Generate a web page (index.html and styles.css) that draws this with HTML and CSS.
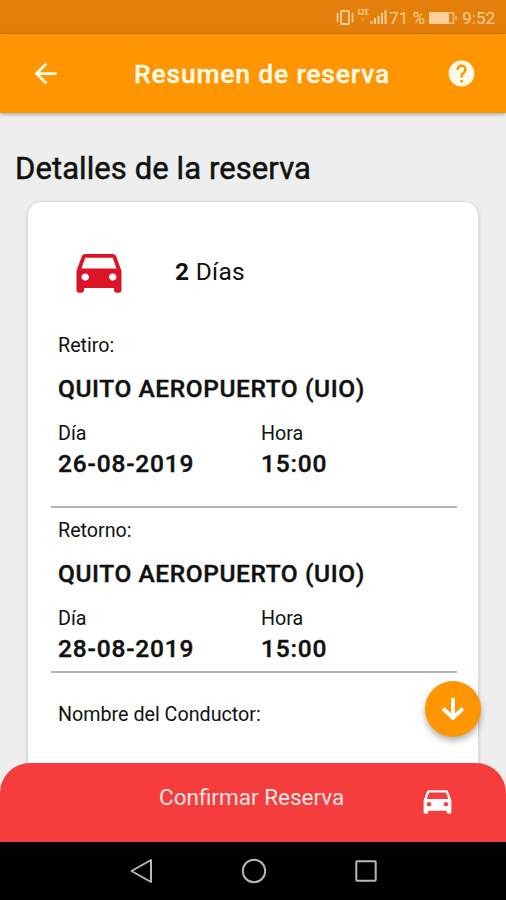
FILE: index.html
```html
<!DOCTYPE html>
<html lang="es">
<head>
<meta charset="utf-8">
<title>Resumen de reserva</title>
<link rel="stylesheet" href="styles.css">
</head>
<body>
<div class="screen">
  <div class="status">
    <svg class="status-icons" width="52" height="20" viewBox="0 0 52 20">
      <rect x="5" y="3" width="8" height="13" rx="1" fill="none" stroke="currentColor" stroke-width="1.9"/>
      <path d="M1.500 5v9M16.500 5v9" stroke="currentColor" stroke-width="1.700"/>
      <path d="M23 1v5h3M25 1.500h4M27 1v6M32.500 1.500h-2.500v5h2.500M30 4h2" fill="none" stroke="currentColor" stroke-width="1.200"/>
      <path d="M25 10l2 3 2-3" fill="none" stroke="currentColor" opacity=".35"/>
      <path d="M35.500 16v-3M39 16v-6M42.500 16V8M46 16V5M49.500 16V2" stroke="currentColor" stroke-width="2"/>
    </svg>
    <span class="percent">71 %</span>
    <svg class="battery" width="28" height="14" viewBox="0 0 28 14">
      <rect x="0" y="1" width="20" height="12" rx="1" fill="currentColor"/>
      <path d="M20 1.800h4.500v10.400H20M27 5v4" fill="none" stroke="currentColor" stroke-width="1.300"/>
    </svg>
    <span class="clock">9:52</span>
  </div>
  <header class="appbar">
    <svg class="back" width="33" height="33" viewBox="0 0 24 24"><path d="M20 11H7.830l5.590-5.590L12 4l-8 8 8 8 1.410-1.410L7.830 13H20v-2z"/></svg>
    <h1 class="title">Resumen de reserva</h1>
    <svg class="help" width="31" height="31" viewBox="0 0 24 24"><path d="M12 2C6.480 2 2 6.480 2 12s4.480 10 10 10 10-4.480 10-10S17.520 2 12 2zm1 17h-2v-2h2v2zm2.070-7.750l-.9.920C13.450 12.900 13 13.500 13 15h-2v-.5c0-1.100.45-2.100 1.170-2.830l1.240-1.260c.37-.36.59-.86.59-1.410 0-1.100-.9-2-2-2s-2 .9-2 2H8c0-2.210 1.790-4 4-4s4 1.790 4 4c0 .88-.36 1.680-.93 2.250z"/></svg>
  </header>
  <main class="content">
    <h2 class="heading">Detalles de la reserva</h2>
    <section class="card">
      <div class="summary">
        <svg class="car" width="60" height="58" viewBox="0 0 24 24" preserveAspectRatio="none"><path d="M18.920 6.010C18.720 5.420 18.160 5 17.500 5h-11c-.66 0-1.210.42-1.420 1.010L3 12v8c0 .55.45 1 1 1h1c.55 0 1-.45 1-1v-1h12v1c0 .55.45 1 1 1h1c.55 0 1-.45 1-1v-8l-2.080-5.990zM6.500 16c-.83 0-1.500-.67-1.500-1.500S5.670 13 6.500 13s1.500.67 1.500 1.500S7.330 16 6.500 16zm11 0c-.83 0-1.500-.67-1.500-1.500s.67-1.500 1.500-1.500 1.500.67 1.500 1.500-.67 1.500-1.500 1.500zM5 11l1.500-4.500h11L19 11H5z"/></svg>
        <p class="days"><b>2</b> Días</p>
      </div>
      <div class="leg pickup">
        <p class="label">Retiro:</p>
        <p class="place">QUITO AEROPUERTO (UIO)</p>
        <div class="when">
          <div><p class="sub">Día</p><p class="value">26-08-2019</p></div>
          <div><p class="sub">Hora</p><p class="value">15:00</p></div>
        </div>
      </div>
      <div class="leg return">
        <p class="label">Retorno:</p>
        <p class="place">QUITO AEROPUERTO (UIO)</p>
        <div class="when">
          <div><p class="sub">Día</p><p class="value">28-08-2019</p></div>
          <div><p class="sub">Hora</p><p class="value">15:00</p></div>
        </div>
      </div>
      <p class="driver">Nombre del Conductor:</p>
    </section>
    <div class="fab">
      <svg width="36" height="36" viewBox="0 0 36 36"><path d="M18 7v20M8 17.500l10 9.500 10-9.500" fill="none" stroke="#fff" stroke-width="3.800"/></svg>
    </div>
  </main>
  <footer class="confirm">
    <span class="confirm-text">Confirmar Reserva</span>
    <svg class="confirm-car" width="37" height="35" viewBox="0 0 24 24" preserveAspectRatio="none"><path d="M18.920 6.010C18.720 5.420 18.160 5 17.500 5h-11c-.66 0-1.210.42-1.420 1.010L3 12v8c0 .55.45 1 1 1h1c.55 0 1-.45 1-1v-1h12v1c0 .55.45 1 1 1h1c.55 0 1-.45 1-1v-8l-2.080-5.990zM6.500 16c-.83 0-1.500-.67-1.500-1.500S5.670 13 6.500 13s1.500.67 1.500 1.500S7.330 16 6.500 16zm11 0c-.83 0-1.500-.67-1.500-1.500s.67-1.500 1.500-1.500 1.500.67 1.500 1.500-.67 1.500-1.500 1.500zM5 11l1.500-4.500h11L19 11H5z"/></svg>
  </footer>
  <nav class="navbar">
    <svg width="28" height="28" viewBox="0 0 28 28"><path d="M23 3v22L3.500 14z"/></svg>
    <svg width="28" height="28" viewBox="0 0 28 28"><circle cx="14" cy="14" r="11.200"/></svg>
    <svg width="28" height="28" viewBox="0 0 28 28"><rect x="4.300" y="4.300" width="19.400" height="19.400" rx=".8"/></svg>
  </nav>
</div>
</body>
</html>
```

FILE: styles.css
```css
* { box-sizing: border-box; }
body, h1, h2, p { margin: 0; }
body { font-family: Roboto, "Liberation Sans", sans-serif; color: #111; background: #eee; }
svg { display: block; flex: none; }

.screen { width: 506px; height: 900px; display: flex; flex-direction: column; overflow: hidden; background: #eee; white-space: nowrap; }

.status { height: 34px; flex: none; display: flex; align-items: center; justify-content: flex-end; padding: 2px 11px 0 0; background: #e57f0b; color: #fbcf96; font-size: 17px; }
.status-icons { margin-right: 1px; }
.percent { width: 36px; }
.battery { margin: 0 5px 0 4px; }

.appbar { height: 79px; flex: none; display: flex; align-items: center; padding: 0 29px; background: #ff9500; box-shadow: 0 1px 4px rgba(0,0,0,.35); z-index: 1; }
.appbar svg { fill: #fffbe8; }
.title { flex: 1; padding: 1px 0 0 72px; font-size: 26.5px; line-height: 32px; font-weight: 500; letter-spacing: .8px; color: #fffbe8; -webkit-text-stroke: .3px #fffbe8; }

.content { height: 650px; flex: none; position: relative; padding: 36px 28px 0; }
.heading { margin: 0 0 13px -13px; font-size: 31px; line-height: 40px; height: 40px; font-weight: 400; letter-spacing: .08px; -webkit-text-stroke: .5px #111; }
.card { width: 450px; height: 600px; background: #fff; border-radius: 14px; padding: 40px 23px 0; box-shadow: 0 1px 4px rgba(0,0,0,.22); }
.summary { display: flex; align-items: center; height: 60px; padding-left: 18px; }
.car { fill: #dc1428; margin-top: -2px; }
.days { margin-left: 46px; font-size: 24.5px; line-height: 30px; letter-spacing: .3px; }
.days b { font-weight: 700; }

.leg { padding-left: 7px; border-bottom: 2px solid #b5b5b5; width: 406px; }
.pickup { padding-top: 32px; height: 206px; }
.return { padding-top: 11px; height: 165px; }
.label, .sub, .driver { font-size: 19.7px; line-height: 24px; }
.place { margin-top: 17px; font-size: 24.5px; line-height: 28px; font-weight: 500; letter-spacing: .58px; -webkit-text-stroke: .4px #111; }
.when { display: grid; grid-template-columns: 203px 1fr; margin-top: 19px; }
.value { margin-top: 4px; font-size: 24.5px; line-height: 28px; font-weight: 500; letter-spacing: .83px; -webkit-text-stroke: .4px #111; }
.driver { margin: 30px 0 0 7px; }

.fab { position: absolute; left: 425px; top: 568px; width: 56px; height: 56px; border-radius: 50%; background: #ff9500; display: flex; align-items: center; justify-content: center; box-shadow: 0 4px 6px rgba(0,0,0,.3); }

.confirm { height: 79px; flex: none; position: relative; z-index: 1; display: flex; align-items: center; padding: 0 50px 11px 159px; background: #f53d3d; border-radius: 30px 30px 0 0; color: #ffe4e4; }
.confirm-text { flex: 1; font-size: 22.5px; line-height: 28px; }
.confirm-car { fill: #fff; margin-top: 6px; }

.navbar { height: 58px; flex: none; display: flex; justify-content: center; align-items: center; gap: 84px; padding-left: 2px; background: #000; }
.navbar svg { fill: none; stroke: #b8b8b8; stroke-width: 2; stroke-linejoin: round; }
```
